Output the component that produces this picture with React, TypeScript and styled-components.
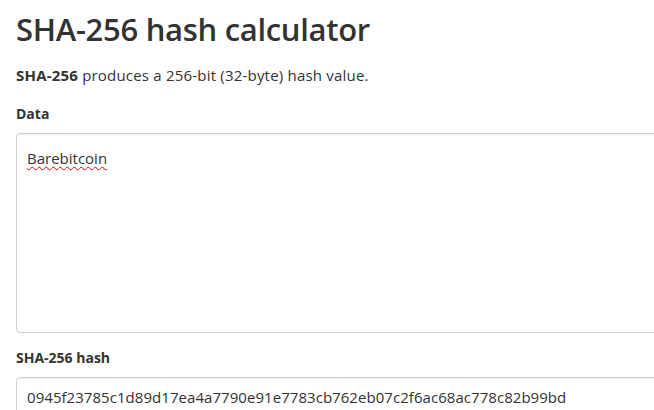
import React from "react";
import styled, { createGlobalStyle } from "styled-components";

const Global = createGlobalStyle`
  html, body { margin: 0; padding: 0; background: #fff; overflow: hidden; }
  body {
    font-family: "Open Sans", "Noto Sans", sans-serif;
    font-size: 15px;
    line-height: 20px;
    color: #333;
  }
`;

const Page = styled.div`
  width: 760px;
  padding: 0 16px;
  box-sizing: border-box;
`;

const Title = styled.h1`
  margin: 9px 0 0;
  font-size: 31px;
  font-weight: 600;
  line-height: 40px;
  color: #333;
  letter-spacing: -0.3px;
`;

const Lead = styled.p`
  margin: 16px 0 0;
  font-size: 15px;
  line-height: 20px;
  letter-spacing: 0.2px;
  strong { font-weight: 700; }
`;

const Field = styled.div<{ $top: number }>`
  display: flex;
  flex-direction: column;
  margin-top: ${(p) => p.$top}px;
`;

const Label = styled.label`
  font-weight: 700;
  font-size: 14px;
  line-height: 20px;
  margin-bottom: 9px;
`;

const controlBase = `
  font-family: inherit;
  font-size: 15px;
  line-height: 20px;
  color: #333;
  border: 1px solid #cfcfcf;
  border-radius: 4px;
  box-shadow: inset 0 1px 1px rgba(0,0,0,.075);
  background: #fff;
  box-sizing: border-box;
  width: 100%;
  outline: none;
`;

const TextBox = styled.div`
  ${controlBase}
  height: 200px;
  padding: 14px 10px 6px;
  white-space: pre-wrap;
`;

const Misspelled = styled.span`
  text-decoration: underline wavy #e00;
  text-decoration-thickness: 1px;
  text-underline-offset: 2px;
`;

const Input = styled.input`
  ${controlBase}
  height: 37px;
  padding: 9px 10px 6px;
  letter-spacing: 0.05px;
`;

export default function App() {
  return (
    <>
      <Global />
      <Page>
        <Title>SHA-256 hash calculator</Title>
        <Lead>
          <strong>SHA-256</strong> produces a 256-bit (32-byte) hash value.
        </Lead>
        <Field $top={19}>
          <Label>Data</Label>
          <TextBox role="textbox" aria-multiline="true" contentEditable suppressContentEditableWarning spellCheck={false}>
            <Misspelled>Barebitcoin</Misspelled>
          </TextBox>
        </Field>
        <Field $top={15}>
          <Label>SHA-256 hash</Label>
          <Input
            readOnly
            value="0945f23785c1d89d17ea4a7790e91e7783cb762eb07c2f6ac68ac778c82b99bd"
          />
        </Field>
      </Page>
    </>
  );
}
